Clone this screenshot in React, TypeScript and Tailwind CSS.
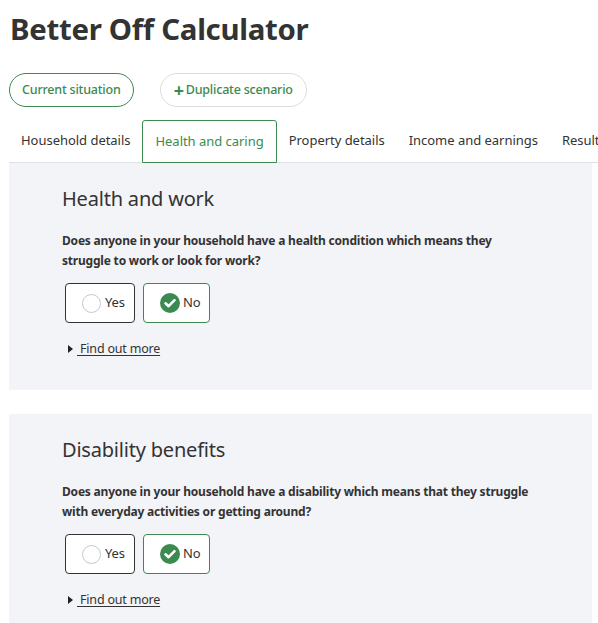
import React from "react";

const font = { fontFamily: '"Noto Sans", "Open Sans", sans-serif' };

function Choice({ label, selected }: { label: string; selected: boolean }) {
  return (
    <div
      className={`flex h-[40px] items-center rounded-[4px] border bg-white text-[13px] tracking-[-0.2px] text-[#333] ${
        selected ? "border-[#3b8a4f] w-[67px] pl-[16px]" : "border-[#333] w-[70px] pl-[16px]"
      }`}
    >
      {selected ? (
        <svg width="20" height="20" viewBox="0 0 20 20" className="mr-[3px]">
          <circle cx="10" cy="10" r="10" fill="#3b8a4f" />
          <path d="M5.5 10.3 L8.6 13.2 L14.5 7.2" stroke="#fff" strokeWidth="2.6" fill="none" strokeLinecap="round" strokeLinejoin="round" />
        </svg>
      ) : (
        <span className="mr-[4px] box-border h-[19px] w-[19px] rounded-full border border-[#c4c8cf] bg-white" />
      )}
      {label}
    </div>
  );
}

function Panel({ title, q1, q2, className }: { title: string; q1: string; q2: string; className?: string }) {
  return (
    <section className={`bg-[#f3f4f8] pl-[53px] ${className ?? ""}`}>
      <h2 className="pt-[23px] text-[20px] leading-[26px] tracking-[-0.2px] text-[#333]">{title}</h2>
      <p className="mt-[19px] text-[12px] font-bold leading-[20px] tracking-[-0.2px] text-[#333]">
        {q1}
        <br />
        {q2}
      </p>
      <div className="mt-[12px] flex gap-[8px] pl-[3px]">
        <Choice label="Yes" selected={false} />
        <Choice label="No" selected />
      </div>
      <div className="mt-[17px] flex items-center pl-[6px] text-[12.5px] tracking-[-0.2px] text-[#333]">
        <svg width="5" height="8" viewBox="0 0 5 8" className="mr-[4px]">
          <path d="M0 0 L5 4 L0 8 Z" fill="#222" />
        </svg>
        <span className="underline underline-offset-2">&nbsp;Find out more</span>
      </div>
    </section>
  );
}

export default function App() {
  return (
    <div className="h-[623px] w-[598px] overflow-hidden bg-white" style={font}>
      <h1 className="pl-[10px] pt-[10px] text-[29.4px] font-bold leading-[38px] tracking-[-0.3px] text-[#333]">
        Better Off Calculator
      </h1>
      <div className="mt-[25px] flex gap-[26px] pl-[9px]">
        <button className="h-[34px] rounded-full border border-[#3b8a4f] px-[12px] text-[12.5px] font-medium tracking-[-0.2px] text-[#3b8a4f]">
          Current situation
        </button>
        <button className="flex h-[34px] items-center rounded-full border border-[#dcdde0] px-[13px] text-[12.5px] font-medium tracking-[-0.2px] text-[#3b8a4f]">
          <span className="mr-[2px] text-[18px] font-bold leading-none">+</span>Duplicate scenario
        </button>
      </div>
      <div className="ml-[9px] mt-[13px] flex whitespace-nowrap border-b border-[#dfe1e6] text-[13px] tracking-[-0.03px] text-[#333]">
        <div className="flex h-[42px] items-center px-[12px]">Household details</div>
        <div className="-mb-px flex h-[43px] items-center rounded-t-[3px] border border-[#3b8a4f] px-[12px] text-[#3b8a4f]">
          Health and caring
        </div>
        <div className="flex h-[42px] items-center px-[12px]">Property details</div>
        <div className="flex h-[42px] items-center px-[12px]">Income and earnings</div>
        <div className="flex h-[42px] items-center px-[12px]">Results</div>
      </div>
      <div className="ml-[9px] mr-[6px]">
        <Panel
          title="Health and work"
          q1="Does anyone in your household have a health condition which means they"
          q2="struggle to work or look for work?"
          className="h-[227px]"
        />
        <Panel
          title="Disability benefits"
          q1="Does anyone in your household have a disability which means that they struggle"
          q2="with everyday activities or getting around?"
          className="mt-[24px] h-[227px]"
        />
      </div>
    </div>
  );
}
